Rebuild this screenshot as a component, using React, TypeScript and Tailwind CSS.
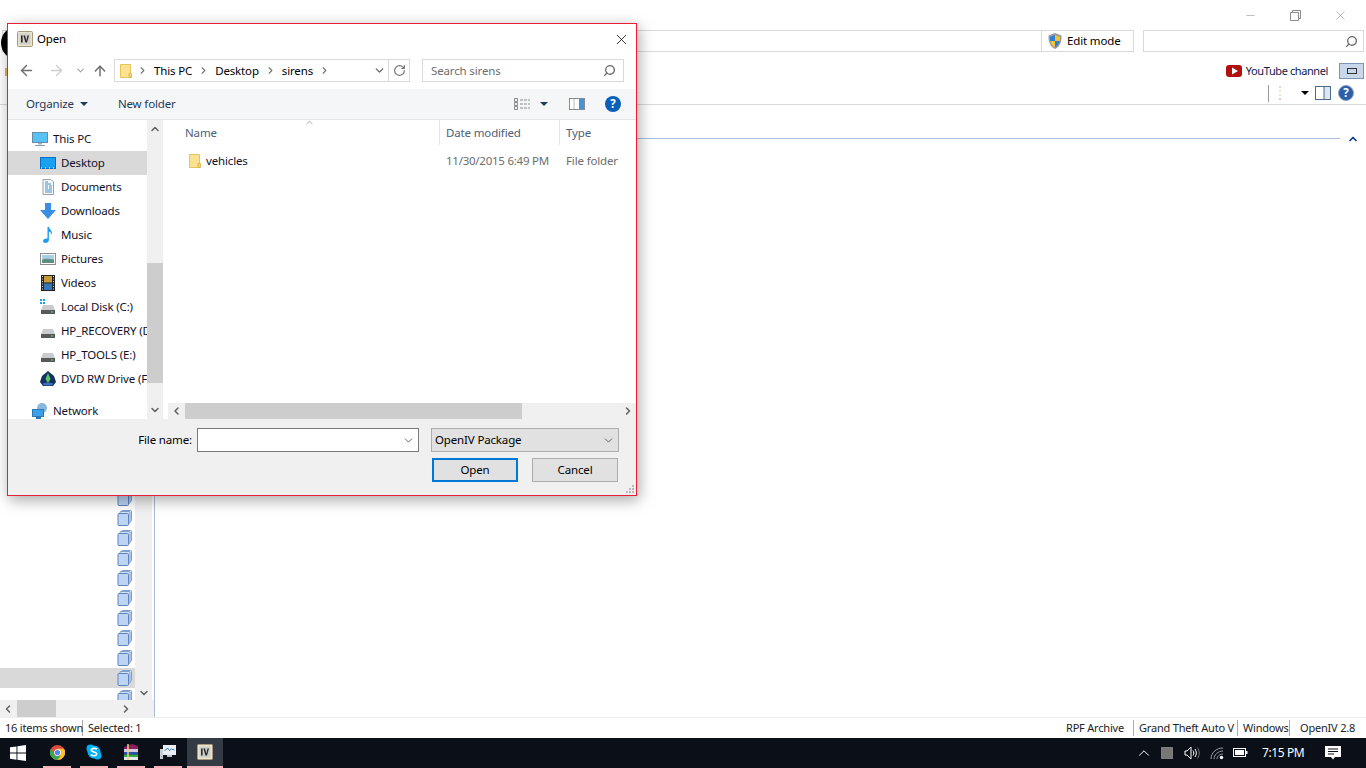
import React from 'react';
import { ChevronDown, ChevronLeft, ChevronRight, ChevronUp, ArrowLeft, ArrowRight, ArrowUp, RotateCw, Search, X, Minus } from 'lucide-react';

const navItems = [
  { label: 'Desktop', icon: 'desktop', selected: true },
  { label: 'Documents', icon: 'documents' },
  { label: 'Downloads', icon: 'downloads' },
  { label: 'Music', icon: 'music' },
  { label: 'Pictures', icon: 'pictures' },
  { label: 'Videos', icon: 'videos' },
  { label: 'Local Disk (C:)', icon: 'disk-c' },
  { label: 'HP_RECOVERY (D:)', icon: 'disk' },
  { label: 'HP_TOOLS (E:)', icon: 'disk' },
  { label: 'DVD RW Drive (F:)', icon: 'dvd' }
];

function FolderIcon({ size = 16 }: { size?: number }) {
  return <svg width={size} height={size} viewBox="0 0 16 16" className="shrink-0">
      <path d="M2.5 1.5h10v13h-10z" fill="#fce28f" stroke="#e6c35c" />
      <path d="M11 10.5h2.5v4H11z" fill="#f3d26f" stroke="#d9b347" strokeWidth="0.8" />
    </svg>;
}

function OivIcon() {
  return <svg width="16" height="16" viewBox="0 0 16 16" className="shrink-0">
      <rect x="0.5" y="0.5" width="15" height="15" rx="1" fill="#e8e2cf" stroke="#a59a7c" />
      <rect x="2.5" y="2.5" width="11" height="11" fill="#cfcfc8" />
      <path d="M4 4.5h1.6v7H4zM6.4 4.5h1.7l1.2 5 1.2-5H12l-2 7H8.4z" fill="#2b2b2b" />
    </svg>;
}

function NavIcon({ kind }: { kind: string }) {
  if (kind === 'pc') return <svg width="16" height="16" viewBox="0 0 16 16" className="shrink-0">
      <rect x="0.5" y="1.5" width="15" height="10" fill="#58c2f5" stroke="#6b8aa3" />
      <path d="M6 12h4v1.5H6z" fill="#9db2c2" />
      <path d="M3 14.5h10" stroke="#8aa0b2" />
    </svg>;
  if (kind === 'desktop') return <svg width="16" height="16" viewBox="0 0 16 16" className="shrink-0">
      <rect x="0.5" y="2.5" width="15" height="11" fill="#19a0f0" stroke="#0a6fc2" />
      <path d="M1 13h14" stroke="#fff" strokeDasharray="1 3" />
    </svg>;
  if (kind === 'documents') return <svg width="16" height="16" viewBox="0 0 16 16" className="shrink-0">
      <path d="M3 .5h8l2.5 2.5v12.5H3z" fill="#f7f9fb" stroke="#9a9fa6" />
      <path d="M5 3h3M5 5h6M5 7h3M9 7h3M5 9h3M9 9h3M5 11h7M5 13h7" stroke="#3f8fd0" />
    </svg>;
  if (kind === 'downloads') return <svg width="16" height="16" viewBox="0 0 16 16" className="shrink-0">
      <path d="M5 0h6v7h5l-8 9-8-9h5z" fill="#3a8ee6" />
    </svg>;
  if (kind === 'music') return <svg width="16" height="16" viewBox="0 0 16 16" className="shrink-0">
      <path d="M7.5 0h1.6c.3 3 4.2 4 2.6 8-.3-2-1.500-3-2.800-3.400V13c0 1.800-1.800 3-3.500 3C4 16 3 15.200 3 14c0-1.500 2-2.800 4.500-2.400z" fill="#1e9cf0" />
    </svg>;
  if (kind === 'pictures') return <svg width="16" height="16" viewBox="0 0 16 16" className="shrink-0">
      <rect x="0.500" y="2.500" width="15" height="11" fill="#fff" stroke="#8d8d8d" />
      <rect x="2" y="4" width="12" height="8" fill="#a9cfe2" />
      <path d="M2 9c3-2 6-1 12-.5V12H2z" fill="#5e8f80" />
    </svg>;
  if (kind === 'videos') return <svg width="16" height="16" viewBox="0 0 16 16" className="shrink-0">
      <rect x="1" y="0" width="14" height="16" fill="#222" />
      <rect x="4" y="1" width="8" height="6.500" fill="#c89a3a" />
      <rect x="4" y="8.500" width="8" height="6.500" fill="#3577b8" />
      <path d="M2.500 1v14M13.500 1v14" stroke="#ddd" strokeDasharray="1 1.500" />
    </svg>;
  if (kind === 'dvd') return <svg width="16" height="16" viewBox="0 0 16 16" className="shrink-0">
      <path d="M8 0l6 5 2 6-3 4H3l-3-4 2-6z" fill="#14315f" />
      <path d="M8 2l2.500 6L8 12 5.500 8z" fill="#58c96a" />
      <ellipse cx="8" cy="13" rx="5" ry="1.500" fill="#3f70b8" />
    </svg>;
  if (kind === 'network') return <svg width="16" height="16" viewBox="0 0 16 16" className="shrink-0">
      <circle cx="10" cy="5" r="5" fill="#8ab8dc" />
      <rect x="0.500" y="6.500" width="11" height="7" fill="#3ca0e8" stroke="#2a78b8" />
      <path d="M4 15h5" stroke="#2a78b8" strokeWidth="2" />
    </svg>;
  return <svg width="16" height="16" viewBox="0 0 16 16" className="shrink-0">
      {kind === 'disk-c' && <path d="M0 0h2v2H0zM3 0h2v2H3zM0 3h2v2H0zM3 3h2v2H3z" fill="#19a0f0" />}
      <path d="M3 6h10l2 5H1z" fill="#c9ccce" />
      <rect x="1" y="11" width="14" height="4" fill="#55595c" />
      <rect x="11" y="12.500" width="2" height="1" fill="#6fe04f" />
    </svg>;
}

function StackIcon() {
  return <svg width="16" height="16" viewBox="0 0 16 16" className="shrink-0">
      <rect x="4.500" y="0.500" width="10" height="11" rx="1" fill="#dce9fa" stroke="#7f9fcc" />
      <rect x="3" y="1.500" width="10" height="12" rx="1" fill="#d3e3f8" stroke="#7f9fcc" />
      <rect x="1" y="3.500" width="10.500" height="12" rx="1" fill="#bcd5f5" stroke="#5f84bd" />
    </svg>;
}

function NavRow({ label, icon, selected, indent }: { label: string; icon: string; selected?: boolean; indent: string }) {
  return <div className={`h-6 flex items-center gap-[5px] whitespace-nowrap overflow-hidden ${indent} ${selected ? 'bg-[#d9d9d9]' : ''}`}>
      <NavIcon kind={icon} />
      <span className="text-[#10102a]">{label}</span>
    </div>;
}

function OpenDialog() {
  return <div className="absolute left-[7px] top-[23px] w-[630px] h-[473px] flex flex-col bg-white border border-[#e81f35] shadow-[2px_4px_14px_rgba(0,0,0,0.35)]">
      <div className="h-[29px] shrink-0 flex items-center pl-[9px] pr-[6px] pt-[1px]">
        <OivIcon />
        <span className="ml-[4px] text-black">Open</span>
        <X size={17} strokeWidth={1.100} className="ml-auto text-black" />
      </div>
      <div className="h-[23px] mt-[6px] shrink-0 flex items-center pl-[10px] pr-[12px]">
        <ArrowLeft size={17} strokeWidth={2} className="text-[#6d6d6d]" />
        <ArrowRight size={17} strokeWidth={2} className="ml-[13px] text-[#cfcfcf]" />
        <ChevronDown size={11} strokeWidth={2.500} className="ml-[10px] text-[#a5a5a5]" />
        <ArrowUp size={16} strokeWidth={2.200} className="ml-[6px] text-[#6d6d6d]" />
        <div className="ml-[6px] w-[296px] h-[23px] flex items-center border border-[#d9d9d9]">
          <div className="flex-1 flex items-center pl-[3px]">
            <FolderIcon />
            <ChevronRight size={11} strokeWidth={2.500} className="ml-[3px] text-[#777]" />
            <span className="ml-[6px] text-black">This PC</span>
            <ChevronRight size={11} strokeWidth={2.500} className="ml-[6px] text-[#777]" />
            <span className="ml-[6px] text-black">Desktop</span>
            <ChevronRight size={11} strokeWidth={2.500} className="ml-[6px] text-[#777]" />
            <span className="ml-[6px] text-black">sirens</span>
            <ChevronRight size={11} strokeWidth={2.500} className="ml-[6px] text-[#777]" />
          </div>
          <ChevronDown size={13} strokeWidth={2.500} className="mr-[2px] text-[#666]" />
          <div className="w-[21px] h-full flex items-center justify-center border-l border-[#d9d9d9]">
            <RotateCw size={13} strokeWidth={2.200} className="text-[#777]" />
          </div>
        </div>
        <div className="ml-[12px] w-[202px] h-[23px] flex items-center justify-between pl-[8px] pr-[7px] border border-[#d9d9d9] text-[#6d6d6d]">
          <span>Search sirens</span>
          <Search size={13} strokeWidth={2.500} className="-scale-x-100 text-[#6d6d6d]" />
        </div>
      </div>
      <div className="h-[31px] mt-[7px] shrink-0 flex items-center bg-[#f5f6f7] border-b border-[#e6e6e6] pl-[18px] pr-[15px] text-[#1e395b]">
        <span>Organize</span>
        <span className="ml-[6px] w-0 h-0 border-x-[4px] border-x-transparent border-t-[4px] border-t-[#1e395b]" />
        <span className="ml-[30px]">New folder</span>
        <svg width="16" height="12" viewBox="0 0 16 12" className="ml-auto">
          <path d="M.5.500h3v3h-3zM.5 4.500h3v3h-3zM.5 8.500h3v3h-3z" fill="none" stroke="#8a8a8a" />
          <path d="M6 2h10M6 6h10M6 10h10" stroke="#8a8a8a" strokeDasharray="3 1" />
        </svg>
        <span className="ml-[10px] w-0 h-0 border-x-[4px] border-x-transparent border-t-[4px] border-t-[#1e395b]" />
        <svg width="16" height="12" viewBox="0 0 16 12" className="ml-[21px]">
          <rect x="0.500" y="0.500" width="15" height="11" fill="#fff" stroke="#8a8a8a" />
          <rect x="10" y="1" width="5" height="10" fill="#3f95e0" />
          <path d="M5 1v10" stroke="#bbb" />
        </svg>
        <span className="ml-[20px] w-4 h-4 rounded-full bg-[#0a5fb8] text-white font-bold flex items-center justify-center">?</span>
      </div>
      <div className="flex-1 min-h-0 flex">
        <div className="w-[139px] shrink-0 pt-[7px] overflow-hidden">
          <NavRow label="This PC" icon="pc" indent="pl-[24px]" />
          {navItems.map(item => <NavRow key={item.label} label={item.label} icon={item.icon} selected={item.selected} indent="pl-[32px]" />)}
          <div className="mt-2">
            <NavRow label="Network" icon="network" indent="pl-[24px]" />
          </div>
        </div>
        <div className="w-[16px] shrink-0 bg-[#f0f0f0] flex flex-col items-center justify-between relative">
          <ChevronUp size={12} strokeWidth={3} className="mt-[3px] text-[#606060]" />
          <div className="absolute left-0 right-0 top-[143px] h-[120px] bg-[#cdcdcd]" />
          <ChevronDown size={12} strokeWidth={3} className="mb-[3px] text-[#606060]" />
        </div>
        <div className="flex-1 min-w-0 flex flex-col ml-[5px]">
          <div className="h-[25px] shrink-0 flex relative text-[#4c607a]">
            <ChevronUp size={11} strokeWidth={1.500} className="absolute left-[136px] top-[-3px] text-[#8a8a8a]" />
            <div className="w-[272px] pl-[17px] flex items-center border-r border-[#e5e5e5]">Name</div>
            <div className="w-[120px] pl-[6px] flex items-center border-r border-[#e5e5e5]">Date modified</div>
            <div className="pl-[6px] flex items-center">Type</div>
          </div>
          <div className="flex-1 min-h-0 text-[#6d6d6d]">
            <div className="h-[22px] mt-[5px] flex items-center">
              <div className="w-[272px] pl-[19px] flex items-center gap-[3px]">
                <FolderIcon />
                <span className="text-[#10102a]">vehicles</span>
              </div>
              <div className="w-[120px] pl-[6px] whitespace-nowrap tracking-[-0.25px]">11/30/2015 6:49 PM</div>
              <div className="pl-[6px] whitespace-nowrap">File folder</div>
            </div>
          </div>
          <div className="h-[16px] shrink-0 flex items-center bg-[#f0f0f0]">
            <ChevronLeft size={12} strokeWidth={3} className="w-[17px] text-[#606060]" />
            <div className="w-[337px] h-full bg-[#cdcdcd]" />
            <ChevronRight size={12} strokeWidth={3} className="ml-auto mr-[2px] text-[#606060]" />
          </div>
        </div>
      </div>
      <div className="h-[76px] shrink-0 bg-[#f0f0f0] flex flex-col items-end pr-[17px] pt-[9px] relative">
        <div className="flex items-center">
          <span className="text-black mr-[5px]">File name:</span>
          <div className="w-[222px] h-6 bg-white border border-[#7a7a7a] flex items-center justify-end pr-[3px]">
            <ChevronDown size={13} strokeWidth={1.500} className="text-[#444]" />
          </div>
          <div className="ml-[12px] w-[188px] h-6 bg-[#e1e1e1] border border-[#adadad] flex items-center justify-between pl-[3px] pr-[3px] text-black">
            <span>OpenIV Package</span>
            <ChevronDown size={13} strokeWidth={1.500} className="text-[#444]" />
          </div>
        </div>
        <div className="flex items-start mt-[6px] mr-[1px] text-black">
          <button className="w-[86px] h-6 bg-[#e1e1e1] border-2 border-[#0078d7]">Open</button>
          <button className="ml-[14px] w-[86px] h-6 bg-[#e1e1e1] border border-[#adadad]">Cancel</button>
        </div>
        <svg width="10" height="10" viewBox="0 0 10 10" className="absolute right-[1px] bottom-[1px]">
          <path d="M7 1h2v2H7zM4 4h2v2H4zM7 4h2v2H7zM1 7h2v2H1zM4 7h2v2H4zM7 7h2v2H7z" fill="#b8b8b8" />
        </svg>
      </div>
    </div>;
}

function Taskbar() {
  const slots = [
    <svg key="win" width="16" height="16" viewBox="0 0 16 16"><path d="M0 2.300 6.500 1.400v6.200H0zM7.400 1.300 16 0v7.600H7.400zM0 8.500h6.500v6.200L0 13.800zM7.400 8.500H16V16l-8.600-1.200z" fill="#fff" /></svg>,
    <svg key="chrome" width="15" height="15" viewBox="0 0 16 16"><circle cx="8" cy="8" r="8" fill="#dd4b3e" /><path d="M8 16A8 8 0 0 1 1 4l4 7 6 1z" fill="#3aa757" /><path d="M8 16a8 8 0 0 0 7-12H8l3 8z" fill="#fbc02d" /><circle cx="8" cy="8" r="3.600" fill="#fff" /><circle cx="8" cy="8" r="2.800" fill="#4a8af4" /></svg>,
    <svg key="skype" width="16" height="16" viewBox="0 0 16 16"><circle cx="4.500" cy="4.500" r="4" fill="#00aff0" /><circle cx="11.500" cy="11.500" r="4" fill="#00aff0" /><circle cx="8" cy="8" r="6.500" fill="#00aff0" /><path d="M11 5.300C10 4 5.500 3.800 5.300 6c-.1 2.400 5.500 1.500 5.400 4-.2 2.300-4.800 2-5.800.5" fill="none" stroke="#fff" strokeWidth="1.600" /></svg>,
    <svg key="rar" width="16" height="16" viewBox="0 0 16 16"><path d="M1 3l8-3 6 2v3H1z" fill="#8c1d5c" /><path d="M1 5h14v3H1z" fill="#d9c6df" /><path d="M1 8h14v2.500H1z" fill="#2a4fb0" /><path d="M1 10.500h14V13H1z" fill="#35a84a" /><path d="M1 13h14v3H1z" fill="#e6e6e6" /><path d="M5 0v16" stroke="#e9d27a" strokeWidth="1.500" /></svg>,
    <svg key="mon" width="16" height="16" viewBox="0 0 16 16"><rect x="3" y="1" width="13" height="10" fill="#e9eef2" /><path d="M4.500 7l3-3 2 2.500 2-1.500 3 1" fill="none" stroke="#3578b8" /><path d="M7 11h5v2H7z" fill="#b8c2c9" /><rect x="0" y="5" width="3" height="10" fill="#c7cfd4" /><rect x="1" y="12" width="1" height="1" fill="#44c04a" /></svg>
  ];
  return <div className="h-[30px] shrink-0 bg-[#0a0f18] flex items-stretch text-white">
      <div className="w-[37px] pl-[10px] flex items-center">{slots[0]}</div>
      <div className="flex gap-[9px] pl-[6px]">
        {slots.slice(1).map((s, i) => <div key={i} className="w-[28px] flex items-center justify-center border-b-2 border-[#f7b3b8]">{s}</div>)}
      </div>
      <div className="ml-[5px] w-[36px] flex items-center justify-center bg-[#343b45] border-b-2 border-[#f7b3b8]">
        <OivIcon />
      </div>
      <div className="ml-auto flex items-center pr-[25px]">
        <ChevronUp size={18} strokeWidth={1.300} className="text-white" />
        <svg width="12" height="12" viewBox="0 0 12 12" className="ml-[8px]"><rect x="0.500" y="0.500" width="11" height="11" fill="#777" stroke="#bbb" strokeDasharray="1 1" /></svg>
        <svg width="16" height="14" viewBox="0 0 16 14" className="ml-[11px]"><path d="M1 5h2l4-4v12l-4-4H1z" fill="none" stroke="#fff" /><path d="M9 4.500c1 1.500 1 3.500 0 5M11 3c1.800 2.500 1.800 5.500 0 8" fill="none" stroke="#fff" /><path d="M13.500 1.500c2.300 3.500 2.300 7.500 0 11" fill="none" stroke="#777" /></svg>
        <svg width="15" height="13" viewBox="0 0 15 13" className="ml-[10px]"><path d="M1 12C1 6 6 1 13 1M4 12c0-4 4-8 9-8M7 12c0-2.500 2.500-5 6-5" fill="none" stroke="#9aa0a6" /><circle cx="11.500" cy="10.500" r="1.700" fill="#fff" /></svg>
        <svg width="15" height="10" viewBox="0 0 15 10" className="ml-[8px]"><rect x="0.500" y="0.500" width="12" height="8" fill="none" stroke="#fff" /><rect x="2" y="2" width="9" height="5" fill="#fff" /><rect x="13" y="3" width="1.500" height="3" fill="#fff" /></svg>
        <span className="ml-[14px] text-[12px] tracking-[-0.4px] w-[42px] whitespace-nowrap">7:15 PM</span>
        <svg width="16" height="16" viewBox="0 0 16 16" className="ml-[21px]"><path d="M0 1h16v11h-6l-2 2.500L6 12H0z" fill="#fff" /><path d="M3 4h10M3 6.500h10M3 9h6" stroke="#0a0f18" /></svg>
      </div>
    </div>;
}

export default function App() {
  return <div className="relative h-screen w-full overflow-hidden flex flex-col bg-white font-['Noto_Sans',sans-serif] text-[11.5px] tracking-[-0.15px] leading-4 text-[#1a1a1a]">
      {/* main window behind the dialog */}
      <div className="h-[30px] shrink-0 flex items-center justify-end pr-[18px] text-[#8a8a8a]">
        <Minus size={13} strokeWidth={1} />
        <svg width="11" height="11" viewBox="0 0 11 11" className="ml-[33px]">
          <path d="M.5 2.500h8v8h-8zM2.500 2.500v-2h8v8h-2" fill="none" stroke="#8a8a8a" />
        </svg>
        <X size={15} strokeWidth={1} className="ml-[32px]" />
      </div>
      <div className="h-[22px] shrink-0 flex pl-[2px] pr-[2px]">
        <div className="flex-1 border border-[#d9d9d9] flex justify-end">
          <div className="w-[92px] pl-[6px] flex items-center border-l border-[#d9d9d9] gap-[5px]">
            <svg width="14" height="16" viewBox="0 0 14 16">
              <path d="M7 0l6.500 2.500c.3 6-1.500 11-6.500 13.500C2 13.500.2 8.500.5 2.500z" fill="#9a9a9a" />
              <path d="M7 2l5 2-.3 4H7zM7 8h-4.700C2.800 11 4.500 13 7 14.300z" fill="#f4c531" />
              <path d="M7 2v6H2.200L2 4zM7 8h4.700c-.5 3-2.200 5-4.700 6.300z" fill="#2b7fd6" />
            </svg>
            <span className="text-black">Edit mode</span>
          </div>
        </div>
        <div className="ml-[9px] w-[221px] border border-[#d9d9d9] flex items-center justify-end pr-[5px]">
          <Search size={13} strokeWidth={2.500} className="-scale-x-100 text-[#6d6d6d]" />
        </div>
      </div>
      <div className="h-[30px] shrink-0 flex items-center justify-end pt-[8px] pr-[2px]">
        <svg width="16" height="12" viewBox="0 0 16 12"><rect width="16" height="12" rx="3" fill="#b0110f" /><path d="M6 2.500l6 3.500-6 3.500z" fill="#fff" /></svg>
        <span className="ml-[4px] text-[11px] tracking-[-0.4px] text-[#10204a]">YouTube channel</span>
        <div className="ml-[11px] w-[25px] h-[16px] bg-[#c9d7ea] border border-[#7d95b5] flex items-center justify-center">
          <div className="w-[10px] h-[6px] border border-[#333]" />
        </div>
      </div>
      <div className="h-[23px] shrink-0 flex items-center justify-end pr-[12px] border-b border-[#d9d9d9]">
        <div className="w-px h-[17px] bg-[#9a9a9a]" />
        <svg width="3" height="15" viewBox="0 0 3 15" className="ml-[10px]"><path d="M1 0v2" stroke="#e2a0a0" /><path d="M1 4v2" stroke="#e3d59a" /><path d="M1 8v2" stroke="#a8d6a8" /><path d="M1 12v2" stroke="#d88" /></svg>
        <span className="ml-[19px] w-0 h-0 border-x-[4px] border-x-transparent border-t-[4px] border-t-black" />
        <svg width="16" height="14" viewBox="0 0 16 14" className="ml-[6px]"><rect x="0.500" y="0.500" width="15" height="13" fill="#fff" stroke="#4a6a8f" /><rect x="9" y="1" width="6" height="12" fill="#dce6f0" /><path d="M9 1v12" stroke="#4a6a8f" /></svg>
        <span className="ml-[7px] w-4 h-4 rounded-full bg-[#2b5fa8] border border-[#8aa0c0] text-white font-bold flex items-center justify-center">?</span>
      </div>
      <div className="flex-1 min-h-0 flex">
        <div className="w-[155px] shrink-0 flex flex-col border-r border-[#a9bdd0]">
          <div className="flex-1 min-h-0 flex">
            <div className="flex-1 min-w-0 flex flex-col justify-end overflow-hidden">
              {[0, 1, 2, 3, 4, 5, 6, 7, 8, 9, 10].map(i => <div key={i} className={`h-5 shrink-0 flex items-center justify-end pr-[2px] ${i === 9 ? 'bg-[#d9d9d9]' : ''} ${i === 10 ? '-mb-2' : ''}`}>
                  <StackIcon />
                </div>)}
            </div>
            <div className="w-[17px] shrink-0 bg-[#f0f0f0] flex items-end justify-center pb-[1px] mr-[2px]">
              <ChevronDown size={12} strokeWidth={3} className="text-[#606060]" />
            </div>
          </div>
          <div className="h-[17px] shrink-0 flex items-center bg-[#f0f0f0]">
            <ChevronLeft size={12} strokeWidth={3} className="ml-[2px] text-[#606060]" />
            <div className="ml-[3px] w-[39px] h-full bg-[#cdcdcd]" />
            <ChevronRight size={12} strokeWidth={3} className="ml-[64px] text-[#606060]" />
          </div>
        </div>
        <div className="flex-1 min-w-0 pt-[28px] pr-[7px] flex items-start">
          <div className="flex-1 mt-[5px] h-px bg-[#a9bfdf]" />
          <ChevronUp size={12} strokeWidth={3.500} className="ml-[7px] text-[#123b8c]" />
        </div>
      </div>
      <div className="h-[21px] shrink-0 flex items-center border-t border-[#eeeeee] text-[11px] tracking-[-0.2px] text-[#222]">
        <div className="pl-[5px] w-[83px] border-r border-[#aaa] h-[16px] whitespace-nowrap">16 items shown</div>
        <div className="pl-[5px]">Selected: 1</div>
        <div className="ml-auto w-[68px] h-[16px] border-r border-[#aaa] whitespace-nowrap">RPF Archive</div>
        <div className="w-[104px] h-[16px] pl-[5px] border-r border-[#aaa] whitespace-nowrap">Grand Theft Auto V</div>
        <div className="w-[52px] h-[16px] pl-[5px] border-r border-[#aaa] whitespace-nowrap">Windows</div>
        <div className="w-[76px] pl-[10px] whitespace-nowrap">OpenIV 2.8</div>
      </div>
      <Taskbar />
      {/* logo peeking out from under the dialog */}
      <div className="absolute left-[1px] top-[26px] w-[34px] h-[34px] rounded-full bg-black" />
      <div className="absolute left-[5px] top-[68px] w-[2px] h-[8px] bg-[#e8b04a]" />
      <OpenDialog />
    </div>;
}
